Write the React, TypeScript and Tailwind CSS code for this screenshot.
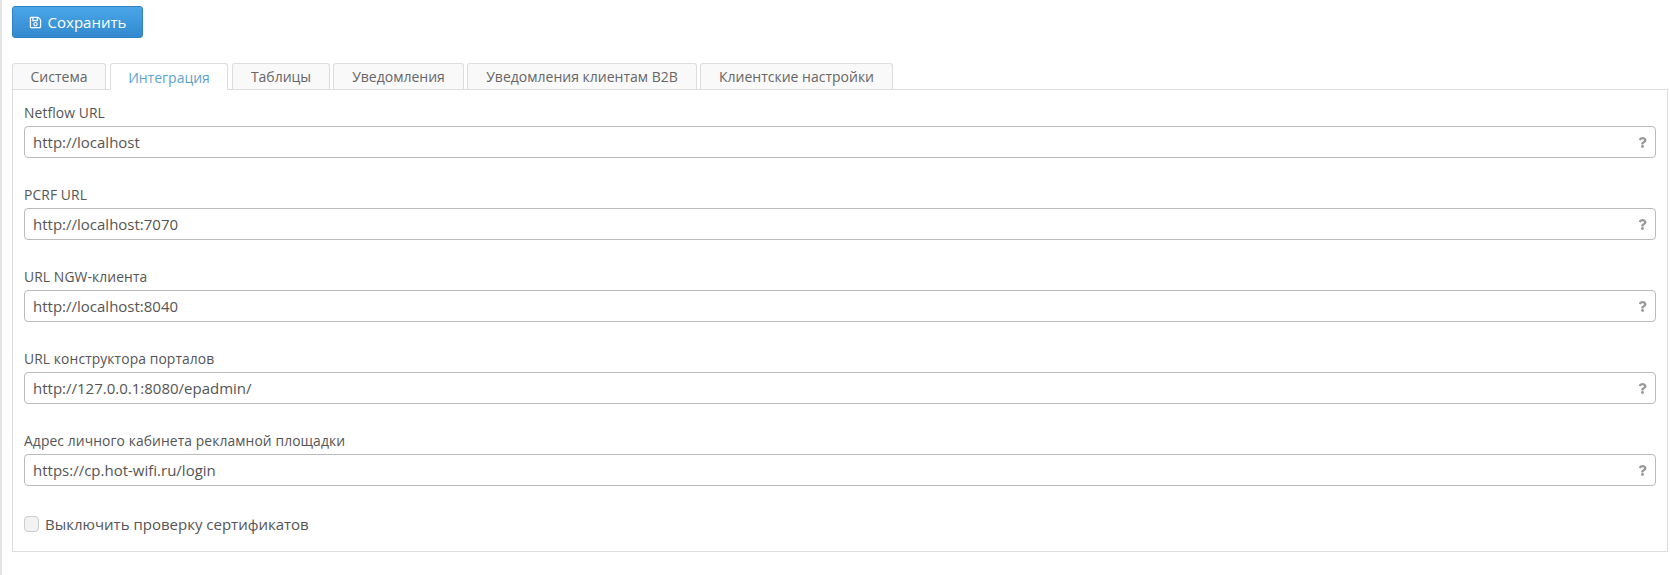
import { FaQuestion, FaRegSave } from "react-icons/fa";

const tabs = [
  ["Система", "w-[94px]"],
  ["Интеграция", "w-[118px] mx-[1px]"],
  ["Таблицы", "w-[98px]"],
  ["Уведомления", "w-[131px]"],
  ["Уведомления клиентам B2B", "w-[230px]"],
  ["Клиентские настройки", "w-[193px]"],
];
const fields = [
  ["Netflow URL", "http://localhost"],
  ["PCRF URL", "http://localhost:7070"],
  ["URL NGW-клиента", "http://localhost:8040"],
  ["URL конструктора порталов", "http://127.0.0.1:8080/epadmin/"],
  ["Адрес личного кабинета рекламной площадки", "https://cp.hot-wifi.ru/login"],
];

export default function App() {
  return (
    <div className="h-[575px] w-[1670px] overflow-hidden border-l-2 border-[#e4e4e4] bg-white pl-[10px] pr-[2px] pt-[6px] font-['Open_Sans',sans-serif] text-[14px] text-[#555]">
      <button className="flex h-[32px] w-[131px] items-center justify-center gap-[6px] rounded-[3px] border border-[#2f82c2] bg-gradient-to-b from-[#4aa6e8] to-[#3289cf] text-[15px] text-white">
        <FaRegSave size={13} />
        <span>Сохранить</span>
      </button>
      <div className="mt-[25px] flex gap-[3px]">
        {tabs.map(([t, w], i) => (
          <div
            key={t}
            className={
              i === 1
                ? `relative z-10 -mb-px flex h-[27px] items-center justify-center rounded-t-[3px] border border-b-0 border-[#ddd] bg-white text-[#5ba3cf] ${w}`
                : `flex h-[26px] items-center justify-center rounded-t-[3px] border border-b-0 border-[#ddd] bg-[#f9f9f9] text-[#666] ${w}`
            }
          >
            {t}
          </div>
        ))}
      </div>
      <div className="h-[463px] border border-[#ddd] px-[11px] pt-[13px]">
        {fields.map(([label, value]) => (
          <div key={label} className="mb-[27px] flex flex-col">
            <label className="mb-[4px] h-[19px] text-[13.85px] leading-[19px] tracking-[0.1px] text-[#555]">{label}</label>
            <div className="flex h-[32px] items-center justify-between rounded-[4px] border border-[#bbb] pl-[8px] pr-[7px]">
              <span className="text-[15px] text-[#555]">{value}</span>
              <FaQuestion size={11} className="text-[#999]" />
            </div>
          </div>
        ))}
        <label className="mt-[9px] flex items-center gap-[6px] text-[15px] text-[#555]">
          <span className="h-[16px] w-[15px] rounded-[4px] border border-[#ccc] bg-[#f2f2f2]" />
          Выключить проверку сертификатов
        </label>
      </div>
    </div>
  );
}
